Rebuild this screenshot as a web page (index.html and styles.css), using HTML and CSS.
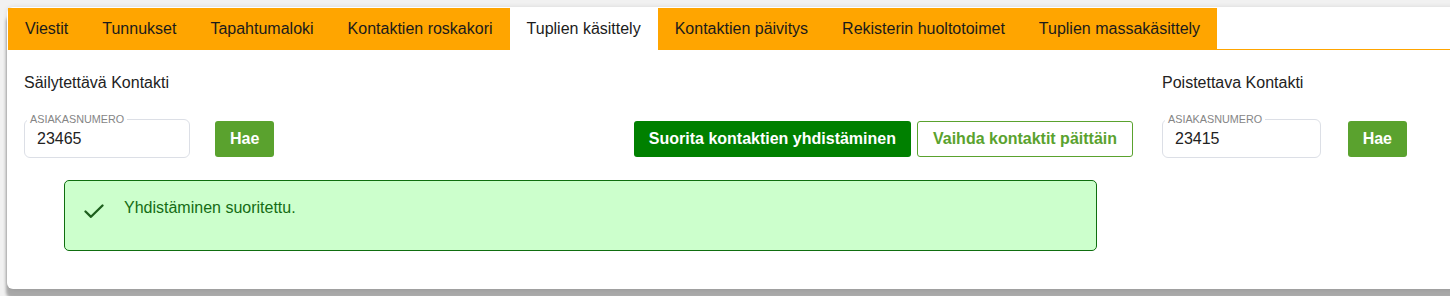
FILE: index.html
```html
<!DOCTYPE html>
<html lang="fi">
<head>
<meta charset="utf-8">
<title>Tuplien käsittely</title>
<link rel="stylesheet" href="styles.css">
</head>
<body>
<div class="card">
  <nav class="tabs">
    <a class="tab">Viestit</a>
    <a class="tab">Tunnukset</a>
    <a class="tab">Tapahtumaloki</a>
    <a class="tab">Kontaktien roskakori</a>
    <a class="tab tab-active">Tuplien käsittely</a>
    <a class="tab">Kontaktien päivitys</a>
    <a class="tab">Rekisterin huoltotoimet</a>
    <a class="tab">Tuplien massakäsittely</a>
  </nav>
  <main class="content">
    <div class="pair">
      <div class="col-label keep-label">Säilytettävä Kontakti</div>
      <div class="col-label del-label">Poistettava Kontakti</div>
      <div class="lookup keep">
        <fieldset class="field field-keep">
          <legend>ASIAKASNUMERO</legend>
          <input class="field-input" type="text" value="23465">
        </fieldset>
        <button class="btn btn-fetch">Hae</button>
      </div>
      <div class="actions">
        <button class="btn btn-primary">Suorita kontaktien yhdistäminen</button>
        <button class="btn btn-outline">Vaihda kontaktit päittäin</button>
      </div>
      <div class="lookup del">
        <fieldset class="field field-del">
          <legend>ASIAKASNUMERO</legend>
          <input class="field-input" type="text" value="23415">
        </fieldset>
        <button class="btn btn-fetch">Hae</button>
      </div>
    </div>
    <div class="alert">
      <svg class="alert-icon" width="20" height="16" viewBox="0 0 20 16" aria-hidden="true">
        <polyline points="1.5,8.5 7,13.8 18.5,2.5" fill="none" stroke="#1d5f1d" stroke-width="2.3" stroke-linecap="round" stroke-linejoin="round"/>
      </svg>
      <span class="alert-text">Yhdistäminen suoritettu.</span>
    </div>
  </main>
</div>
</body>
</html>
```
FILE: styles.css
```css
html, body {
  margin: 0;
  padding: 0;
}
body {
  background: #f1f1f1;
  height: 296px;
  overflow: hidden;
  font-family: "Liberation Sans", Arial, sans-serif;
  color: #222;
}
.card {
  margin: 7px 0 0 7px;
  width: 1460px;
  padding: 1px;
  background: #fff;
  border-radius: 6px;
  box-shadow: -1px 9px 3px rgba(0, 0, 0, 0.3), 0 0 5px rgba(0, 0, 0, 0.1);
}
.tabs {
  display: flex;
  border-bottom: 1px solid #ffa500;
}
.tab {
  display: flex;
  align-items: center;
  box-sizing: border-box;
  height: 42px;
  padding: 0 17px 1px 17px;
  margin-bottom: -1px;
  background: #ffa500;
  color: #1b1b1b;
  font-size: 16px;
}
.tab-active {
  background: #fff;
}
.content {
  padding: 24px 16px 37px 16px;
}
.pair {
  display: grid;
  width: 1383px;
  grid-template-columns: 1fr auto 245px;
  grid-template-areas:
    "keepLabel . delLabel"
    "keep actions del";
  column-gap: 29px;
  row-gap: 21px;
  align-items: end;
}
.col-label {
  font-size: 16px;
  line-height: 18px;
  color: #222;
}
.keep-label { grid-area: keepLabel; }
.del-label { grid-area: delLabel; }
.keep { grid-area: keep; }
.del { grid-area: del; }
.lookup {
  display: flex;
  align-items: flex-end;
}
.keep { gap: 25px; }
.del { gap: 27px; }
.field {
  margin: 0;
  padding: 0 0 0 2px;
  border: 1px solid #dcdfe6;
  border-radius: 6px;
  box-sizing: border-box;
  height: 45px;
}
.field-keep { width: 166px; }
.field-del { width: 161px; }
.field legend {
  padding: 0 3px;
  font-size: 10.8px;
  line-height: 12px;
  color: #858585;
}
.field-input {
  display: block;
  width: 100%;
  box-sizing: border-box;
  height: 32px;
  margin-top: -2px;
  padding: 0 0 0 10px;
  border: 0;
  background: transparent;
  font-family: "Liberation Sans", Arial, sans-serif;
  font-size: 16px;
  color: #222;
  outline: none;
}
.btn {
  height: 36px;
  padding: 0 15px;
  margin-bottom: 1px;
  border: 0;
  border-radius: 3px;
  font-family: "Liberation Sans", Arial, sans-serif;
  font-size: 16px;
  font-weight: bold;
  cursor: pointer;
}
.btn-fetch {
  background: #5aa22e;
  color: #fff;
}
.actions {
  grid-area: actions;
  display: flex;
  gap: 6px;
}
.btn-primary {
  background: #008000;
  color: #fff;
}
.btn-outline {
  background: #fff;
  color: #5aa22e;
  border: 1px solid #5aa22e;
}
.alert {
  margin: 22px 0 0 40px;
  width: 1033px;
  box-sizing: border-box;
  height: 71px;
  padding: 18px 20px 0 19px;
  display: flex;
  align-items: flex-start;
  gap: 20px;
  background: #ccffcc;
  border: 1px solid #0f6e0f;
  border-radius: 5px;
}
.alert-icon {
  margin-top: 4px;
  flex: none;
}
.alert-text {
  font-size: 16px;
  line-height: 18px;
  color: #146c14;
}
```
